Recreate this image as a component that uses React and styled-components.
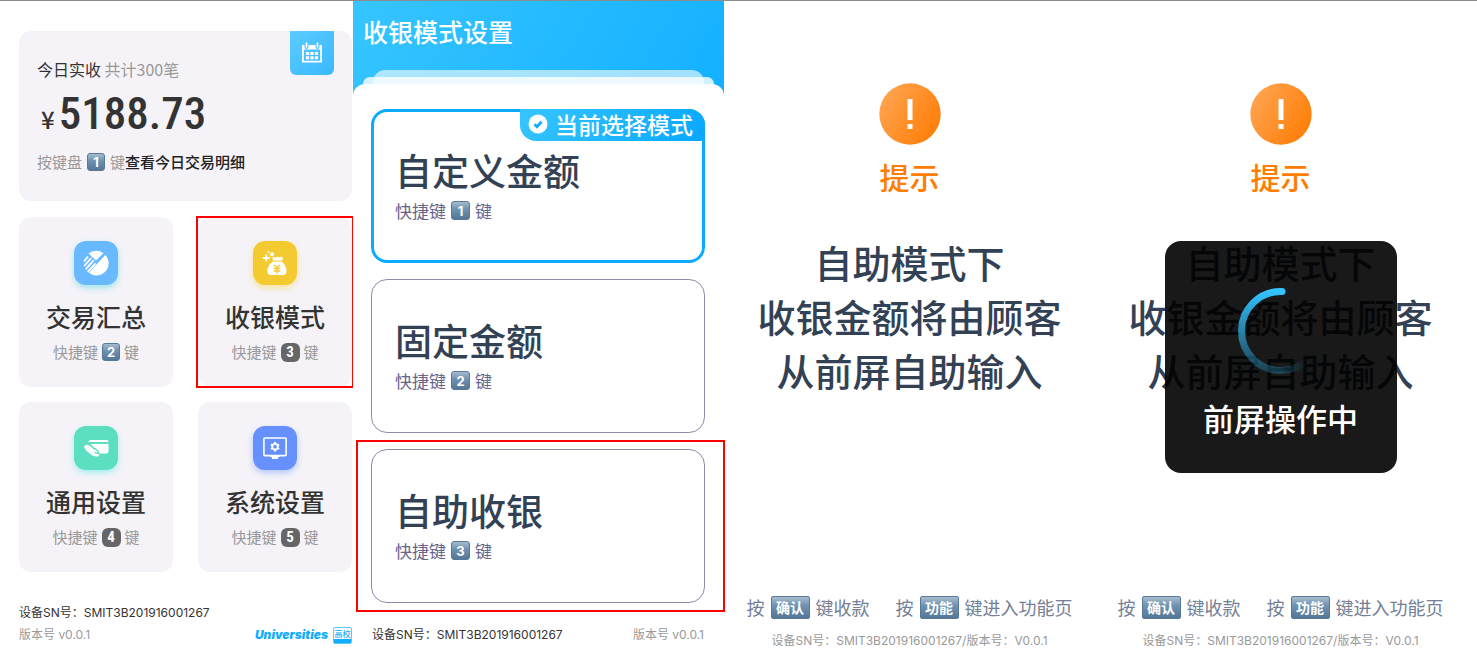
import { Fragment } from "react";
import styled, { createGlobalStyle, css } from "styled-components";

const SN = "SMIT3B201916001267";

const tiles = [
    { title: "交易汇总", hotkey: "2", color: "#69b9ff", shadow: "#9fe4ee", Icon: SummaryIcon },
    { title: "收银模式", hotkey: "3", dark: true, marked: true, color: "#f3ca30", shadow: "#f7e3a0", Icon: MoneyBagIcon },
    { title: "通用设置", hotkey: "4", dark: true, color: "#5cdfc0", shadow: "#a5eef0", Icon: CardHandIcon },
    { title: "系统设置", hotkey: "5", dark: true, color: "#6690fd", shadow: "#b3c6fb", Icon: MonitorIcon },
];

const modes = [
    { title: "自定义金额", hotkey: "1", active: true },
    { title: "固定金额", hotkey: "2" },
    { title: "自助收银", hotkey: "3", marked: true },
];

export default function App() {
    return (
        <Fragment>
            <GlobalStyle />
            <Board>
                <HomeScreen />
                <ModeScreen />
                <TipScreen />
                <TipScreen busy />
            </Board>
        </Fragment>
    );
}

function HomeScreen() {
    return (
        <Home>
            <Summary>
                <CalendarButton type="button" aria-label="日历">
                    <CalendarIcon />
                </CalendarButton>
                <SummaryLine>
                    今日实收 <Muted>共计300笔</Muted>
                </SummaryLine>
                <Amount>
                    <Currency>¥</Currency>5188.73
                </Amount>
                <KeyLine>
                    <Muted>按键盘</Muted>
                    <KeyCap>1</KeyCap>
                    <span>
                        <Muted>键</Muted>
                        <Strong>查看今日交易明细</Strong>
                    </span>
                </KeyLine>
            </Summary>
            <TileGrid>
                {tiles.map(({ title, hotkey, dark, marked, color, shadow, Icon }) => (
                    <Tile type="button" key={title}>
                        <TileIcon $color={color} $shadow={shadow}>
                            <Icon />
                        </TileIcon>
                        <TileTitle>{title}</TileTitle>
                        <Hotkey>
                            快捷键{dark ? <DarkKey>{hotkey}</DarkKey> : <KeyCap>{hotkey}</KeyCap>}键
                        </Hotkey>
                        {marked && <Frame $inset="-1px -2px" />}
                    </Tile>
                ))}
            </TileGrid>
            <HomeFooter>
                <DeviceText>设备SN号：{SN}</DeviceText>
                <FooterRow>
                    <DeviceText $muted>版本号 v0.0.1</DeviceText>
                    <Brand>
                        Universities
                        <BrandTag>
                            高校
                            <BrandBar />
                        </BrandTag>
                    </Brand>
                </FooterRow>
            </HomeFooter>
        </Home>
    );
}

function ModeScreen() {
    return (
        <Panel>
            <Header>
                <HeaderTitle>收银模式设置</HeaderTitle>
                <Layer $side="20px" $alpha={0.6} />
                <Layer $side="10px" $alpha={0.8} $last />
            </Header>
            <Sheet>
                {modes.map(({ title, hotkey, active, marked }) => (
                    <ModeCard type="button" key={title} $active={active}>
                        <ModeTitle>{title}</ModeTitle>
                        <ModeHotkey>
                            快捷键<KeyCap $large>{hotkey}</KeyCap>键
                        </ModeHotkey>
                        {active && (
                            <CurrentBadge>
                                <CheckIcon />
                                当前选择模式
                            </CurrentBadge>
                        )}
                        {marked && <Frame $inset="-10px -21px -10px -16px" />}
                    </ModeCard>
                ))}
                <ModeFooter>
                    <DeviceText>设备SN号：{SN}</DeviceText>
                    <DeviceText $muted>版本号 v0.0.1</DeviceText>
                </ModeFooter>
            </Sheet>
        </Panel>
    );
}

function TipScreen({ busy }) {
    return (
        <Tip>
            <AlertIcon id={busy ? "alert-busy" : "alert-idle"} />
            <TipTitle>提示</TipTitle>
            <TipText>
                自助模式下
                <br />
                收银金额将由顾客
                <br />
                从前屏自助输入
            </TipText>
            <TipFooter>
                <TipKeys>
                    <TipKey>
                        按<WideKey>确认</WideKey>键收款
                    </TipKey>
                    <TipKey>
                        按<WideKey>功能</WideKey>键进入功能页
                    </TipKey>
                </TipKeys>
                <DeviceText $muted>设备SN号：{SN}/版本号：V0.0.1</DeviceText>
            </TipFooter>
            {busy && (
                <Toast role="status">
                    <Spinner />
                    前屏操作中
                </Toast>
            )}
        </Tip>
    );
}

// Icons
function CalendarIcon() {
    return (
        <svg width="22" height="22" viewBox="0 0 22 22" fill="none">
            <path d="M1.900 4h18.200v15.600H1.900z" stroke="#fff" strokeWidth="1.800" />
            <path d="M1 3h20v4.500H1z" fill="#fff" />
            <path d="M5.500 1v4M16.500 1v4" stroke="#4dc2ff" strokeWidth="4" strokeLinecap="round" />
            <path d="M5.500 1.200v3.600M16.500 1.200v3.600" stroke="#fff" strokeWidth="1.800" strokeLinecap="round" />
            <path d="M5 10h3.200v3H5zM9.400 10h3.200v3H9.400zM13.800 10H17v3h-3.200zM5 14.200h3.200v3H5zM9.400 14.200h3.200v3H9.400zM13.800 14.200H17v3h-3.200z" fill="#fff" />
        </svg>
    );
}

function SummaryIcon() {
    return (
        <svg width="26" height="26" viewBox="0 0 26 26">
            <path d="M5.500 3.500A12.200 12.200 0 0 1 20.500 3.200L13 10.500z" fill="#fff" />
            <path d="M22.300 4.900A12.200 12.200 0 0 1 5.800 22.800z" fill="#fff" />
            <path d="M1 11.500l4-5M1.200 16l7-8M2.600 19.300l8-9M4.600 21.800l8-8.500" stroke="#fff" strokeWidth="1.800" />
        </svg>
    );
}

function MoneyBagIcon() {
    return (
        <svg width="26" height="26" viewBox="0 0 26 26">
            <path d="M4.300 4.500v7M.8 8h7M10 2v4.600M7.700 4.300h4.600" stroke="#fff" strokeWidth="1.800" />
            <circle cx="6.500" cy="2" r="1" fill="#fff" />
            <path d="M10.500 8.500q0-1.800 1.800-1.500l1.700.6 1.500-1 1.500 1 1.800-.8q2-.2 2 1.700v.8q0 1.200-1.500 1.200h-7q-1.800 0-1.800-1.200z" fill="#fff" />
            <path d="M11 11.500h8.500q5 4 5 9.800 0 3.700-3.500 3.700H8.700Q5.200 25 5.200 21.300q0-5.800 5.800-9.800z" fill="#fff" />
            <path d="M12 15l3 3 3-3M15 18v5.500M11.700 18.500h6.600M11.700 21h6.600" stroke="#f3ca30" strokeWidth="1.500" fill="none" />
        </svg>
    );
}

function CardHandIcon() {
    return (
        <svg width="26" height="20" viewBox="0 0 26 20" fill="#fff">
            <path d="M5.500 3.500Q5.800 2 7.500 2h16.500Q25.500 2 25.500 3.500v.6H5.300z" />
            <path d="M7.500 6h18v7.500Q25.500 15.500 23 15.500h-6.500Q15.500 11 11 9.500z" />
            <path d="M.8 9l2-2.300Q5 6.500 7 8l3.500 3.200q3.600.8 4.200 3.600l-4.600-1.200q1.700 2.400 6.400 2.800l-1 1.800q-4.500.8-7.800-2L3.700 13z" />
        </svg>
    );
}

function MonitorIcon() {
    return (
        <svg width="24" height="24" viewBox="0 0 24 24">
            <rect x="0.900" y="2" width="22.200" height="17.600" rx="0.800" fill="none" stroke="#fff" strokeWidth="1.600" />
            <path d="M7.500 20h9v1.200h-1.500V23H9v-1.800H7.500z" fill="#fff" />
            <circle cx="12" cy="10.700" r="2.800" fill="none" stroke="#fff" strokeWidth="1.800" />
            <path d="M12 6v2M12 13.400v2M7.900 8.400l1.700 1M14.400 12l1.700 1M7.900 13l1.700-1M14.400 9.400l1.700-1" stroke="#fff" strokeWidth="2" />
        </svg>
    );
}

function CheckIcon() {
    return (
        <svg width="20" height="20" viewBox="0 0 20 20">
            <circle cx="10" cy="10" r="9.500" fill="#fff" />
            <path d="M6.500 10.200l2.500 2.500 4.500-4.900" fill="none" stroke="#13aeff" strokeWidth="3" />
        </svg>
    );
}

function AlertIcon({ id }) {
    return (
        <svg width="62" height="62" viewBox="0 0 62 62">
            <defs>
                <linearGradient id={id} x1="0" y1="0.200" x2="1" y2="0.800">
                    <stop offset="0" stopColor="#ffa552" />
                    <stop offset="1" stopColor="#ff7c04" />
                </linearGradient>
            </defs>
            <circle cx="31" cy="31" r="30.700" fill={`url(#${id})`} />
            <path d="M28.500 16h5v21h-5zM28.500 41h5v5h-5z" fill="#fff" />
        </svg>
    );
}

function Spinner() {
    return (
        <svg width="88" height="88" viewBox="0 0 88 88">
            <defs>
                <linearGradient id="spin" gradientUnits="userSpaceOnUse" x1="0" y1="4" x2="0" y2="84">
                    <stop offset="0" stopColor="#33c3ff" />
                    <stop offset="1" stopColor="#33c3ff" stopOpacity="0.250" />
                </linearGradient>
                <linearGradient id="spin-tail" gradientUnits="userSpaceOnUse" x1="44" y1="84" x2="70" y2="76">
                    <stop offset="0" stopColor="#33c3ff" stopOpacity="0.250" />
                    <stop offset="1" stopColor="#33c3ff" stopOpacity="0" />
                </linearGradient>
            </defs>
            <path d="M44 83.500A39.500 39.500 0 0 1 44 4.500" fill="none" stroke="url(#spin)" strokeWidth="7" />
            <path d="M44 1h1a3.500 3.500 0 0 1 0 7H44z" fill="#33c3ff" />
            <path d="M44 83.500A39.500 39.500 0 0 0 70 73.700" fill="none" stroke="url(#spin-tail)" strokeWidth="7" />
        </svg>
    );
}

// Styled components
const GlobalStyle = createGlobalStyle`
    * {
        box-sizing: border-box;
    }
    body {
        margin: 0;
        background-color: #fff;
        color: #333;
        font-family: "Noto Sans CJK SC", sans-serif;
    }
    button {
        border: none;
        padding: 0;
        font: inherit;
        color: inherit;
        cursor: pointer;
    }
    h1, h2, p {
        margin: 0;
        font-weight: 400;
    }
    svg {
        display: block;
        flex: none;
    }
`;

const Board = styled.main`
    display: grid;
    grid-template-columns: 353fr 371fr 371fr 371fr;
    min-height: 100vh;
    padding-right: 11px;
    border-top: 1px solid #8c8c8c;
`;

const Panel = styled.section`
    min-width: 0;
`;

const Home = styled(Panel)`
    padding: 30px 1px 0 19px;
    overflow: hidden;
`;

const Summary = styled.div`
    position: relative;
    height: 170px;
    padding: 26px 18px 0;
    border-radius: 12px;
    background-color: #f5f3f7;
`;

const CalendarButton = styled.button`
    position: absolute;
    top: 0;
    right: 18px;
    display: grid;
    place-items: center;
    width: 44px;
    height: 44px;
    border-radius: 0 0 6px 6px;
    background: linear-gradient(135deg, #5accff, #3bb8ff);
`;

const SummaryLine = styled.p`
    font-size: 16px;
    line-height: 24px;
`;

const Muted = styled.span`
    color: #999;
`;

const Strong = styled.span`
    color: #222;
    font-weight: 500;
`;

const Amount = styled.p`
    padding-left: 4px;
    margin: 7px 0 10px;
    font-family: "Roboto Condensed", Roboto, sans-serif;
    font-size: 45px;
    font-weight: 500;
    line-height: 52px;
`;

const Currency = styled.span`
    font-family: "Noto Sans CJK SC", sans-serif;
    font-size: 24px;
    font-weight: 500;
    line-height: 24px;
    margin-right: 4px;
`;

const KeyLine = styled.p`
    display: flex;
    align-items: center;
    gap: 5px;
    font-size: 15px;
    line-height: 24px;
`;

const keyFace = css`
    display: inline-grid;
    place-items: center;
    border: 1px solid #56789a;
    background: linear-gradient(#a9bccd, #6f93b3 40%, #557796);
    color: #fff;
    font-weight: 700;
`;

const KeyCap = styled.kbd`
    ${keyFace}
    width: ${(props) => (props.$large ? 19 : 18)}px;
    height: ${(props) => (props.$large ? 19 : 18)}px;
    border-radius: 3px;
    font-family: Inter, sans-serif;
    font-size: 13px;
    line-height: 16px;
`;

const DarkKey = styled.kbd`
    display: inline-grid;
    place-items: center;
    width: 19px;
    height: 19px;
    border-radius: 6px;
    background-color: #666;
    color: #fff;
    font-family: "Roboto Condensed", Roboto, sans-serif;
    font-size: 15px;
    font-weight: 700;
    line-height: 19px;
`;

const WideKey = styled.kbd`
    ${keyFace}
    width: 39px;
    height: 23px;
    border-radius: 2px;
    font-family: inherit;
    font-size: 14px;
    line-height: 20px;
`;

const TileGrid = styled.div`
    display: grid;
    grid-template-columns: 1fr 1fr;
    gap: 15px 25px;
    margin-top: 16px;
`;

const Tile = styled.button`
    position: relative;
    display: flex;
    flex-direction: column;
    align-items: center;
    height: 170px;
    padding-top: 24px;
    border-radius: 12px;
    background-color: #f5f3f7;
`;

const TileIcon = styled.span`
    display: grid;
    place-items: center;
    width: 44px;
    height: 44px;
    border-radius: 12px;
    background-color: ${(props) => props.$color};
    box-shadow: 0 3px 6px ${(props) => props.$shadow};
`;

const TileTitle = styled.span`
    margin-top: 14px;
    font-size: 25px;
    font-weight: 500;
    line-height: 34px;
`;

const Hotkey = styled.span`
    display: flex;
    align-items: center;
    gap: 4px;
    margin-top: 7px;
    color: #999;
    font-size: 15px;
    line-height: 24px;
`;

const Frame = styled.span`
    position: absolute;
    inset: ${(props) => props.$inset};
    border: 2px solid #f00;
    pointer-events: none;
`;

const HomeFooter = styled.footer`
    margin-top: 30px;
`;

const DeviceText = styled.p`
    color: ${(props) => (props.$muted ? "#999" : "#333")};
    font-family: Inter, "Noto Sans CJK SC", sans-serif;
    font-size: 12px;
    line-height: 22px;
    white-space: nowrap;
`;

const FooterRow = styled.div`
    display: flex;
    align-items: center;
    justify-content: space-between;
`;

const Brand = styled.div`
    display: flex;
    align-items: center;
    gap: 5px;
    color: #12adff;
    font-family: Inter, sans-serif;
    font-size: 12px;
    font-style: italic;
    font-weight: 900;
    line-height: 18px;
`;

const BrandTag = styled.span`
    display: flex;
    flex-direction: column;
    justify-content: space-between;
    align-items: center;
    width: 19px;
    height: 17px;
    border: 1px solid #5cc6ff;
    border-radius: 2px;
    font-family: "Noto Sans CJK SC", sans-serif;
    font-size: 8px;
    font-style: normal;
    font-weight: 500;
    line-height: 11px;
`;

const BrandBar = styled.i`
    width: 100%;
    height: 4px;
    background-color: #12adff;
`;

const Header = styled.header`
    padding: 10px 0 10px;
    background: linear-gradient(120deg, #36c5ff, #14b0ff);
`;

const HeaderTitle = styled.h1`
    margin-bottom: 19px;
    padding-left: 10px;
    color: #fff;
    font-size: 25px;
    font-weight: 500;
    line-height: 40px;
`;

const Layer = styled.div`
    height: ${(props) => (props.$last ? 7 : 14)}px;
    margin: 0 ${(props) => props.$side} ${(props) => (props.$last ? 0 : "-7px")};
    border-radius: 12px 12px 0 0;
    background-color: rgba(255, 255, 255, ${(props) => props.$alpha});
`;

const Sheet = styled.div`
    position: relative;
    display: flex;
    flex-direction: column;
    gap: 16px;
    margin-top: -10px;
    padding: 25px 19px 0 18px;
    border-radius: 12px 12px 0 0;
    background-color: #fff;
`;

const ModeCard = styled.button`
    position: relative;
    display: flex;
    flex-direction: column;
    justify-content: center;
    height: 154px;
    padding: 0 0 3px ${(props) => (props.$active ? 21 : 23)}px;
    border: ${(props) => (props.$active ? "3px solid #0aabff" : "1px solid #8f8bab")};
    border-radius: 16px;
    background-color: #fff;
    text-align: left;
`;

const ModeTitle = styled.span`
    margin-bottom: 2px;
    color: #334155;
    font-size: 37px;
    font-weight: 500;
    line-height: 50px;
`;

const ModeHotkey = styled.span`
    display: flex;
    align-items: center;
    gap: 5px;
    color: #68648a;
    font-size: 17px;
    line-height: 28px;
`;

const CurrentBadge = styled.span`
    position: absolute;
    top: -3px;
    right: -3px;
    display: flex;
    align-items: center;
    gap: 7px;
    height: 32px;
    padding: 0 12px 2px 8px;
    border-radius: 0 16px 0 16px;
    background: linear-gradient(120deg, #36c5ff, #08a8ff);
    color: #fff;
    font-size: 23px;
    font-weight: 500;
    line-height: 30px;
`;

const ModeFooter = styled.footer`
    display: flex;
    justify-content: space-between;
    padding: 5px 1px 0;
`;

const Tip = styled(Panel)`
    position: relative;
    display: flex;
    flex-direction: column;
    align-items: center;
    padding: 82px 0 9px;
    text-align: center;
`;

const TipTitle = styled.h2`
    margin-top: 11px;
    color: #ff7d00;
    font-size: 30px;
    font-weight: 500;
    line-height: 40px;
`;

const TipText = styled.p`
    margin-top: 39px;
    color: #334155;
    font-size: 38px;
    font-weight: 500;
    line-height: 54px;
`;

const TipFooter = styled.footer`
    margin-top: auto;
`;

const TipKeys = styled.div`
    display: flex;
    gap: 26px;
    margin-bottom: 10px;
`;

const TipKey = styled.p`
    display: flex;
    align-items: center;
    gap: 6px;
    color: #748096;
    font-size: 18px;
    line-height: 26px;
`;

const Toast = styled.div`
    position: absolute;
    top: 240px;
    left: 50%;
    display: flex;
    flex-direction: column;
    align-items: center;
    gap: 21px;
    width: 232px;
    height: 232px;
    margin-left: -116px;
    padding-top: 46px;
    border-radius: 16px;
    background-color: rgba(0, 0, 0, 0.9);
    color: #fff;
    font-size: 31px;
    font-weight: 500;
    line-height: 44px;
`;
